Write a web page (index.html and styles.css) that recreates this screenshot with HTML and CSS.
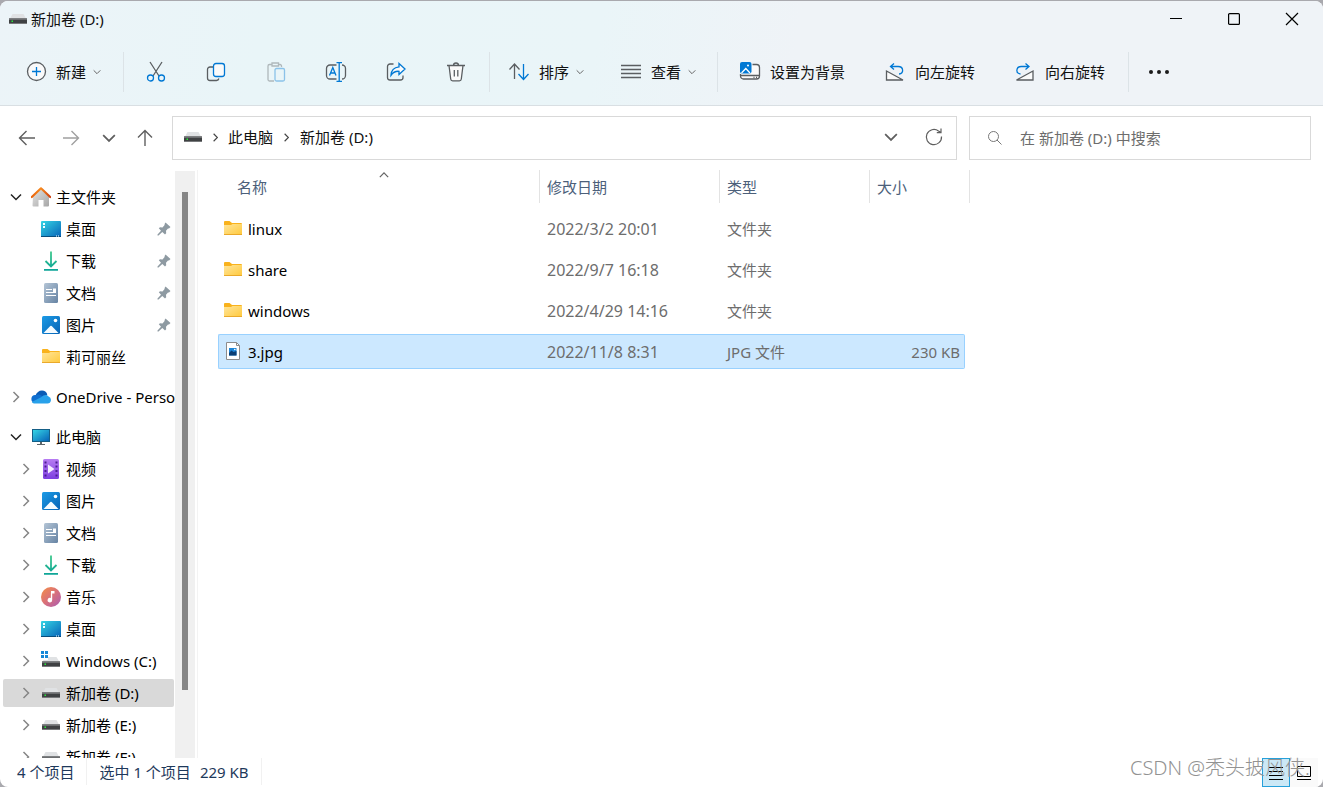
FILE: index.html
```html
<!DOCTYPE html>
<html lang="zh-CN">
<head>
<meta charset="utf-8">
<title>新加卷 (D:)</title>
<link rel="stylesheet" href="styles.css">
</head>
<body>
<svg class="sprite" aria-hidden="true">
  <defs>
    <linearGradient id="g-desk" x1="0" y1="0" x2="1" y2="1"><stop offset="0" stop-color="#35d5e4"/><stop offset="1" stop-color="#0763b8"/></linearGradient>
    <linearGradient id="g-pic" x1="0" y1="0" x2="1" y2="1"><stop offset="0" stop-color="#1c9be6"/><stop offset="1" stop-color="#0763b5"/></linearGradient>
    <linearGradient id="g-folder" x1="0" y1="0" x2="1" y2="1"><stop offset="0" stop-color="#ffe59a"/><stop offset="1" stop-color="#ffc93c"/></linearGradient>
    <linearGradient id="g-doc" x1="0" y1="0" x2="1" y2="1"><stop offset="0" stop-color="#b4c5d6"/><stop offset="1" stop-color="#6683a3"/></linearGradient>
    <linearGradient id="g-down" x1="0" y1="0" x2="0" y2="20" gradientUnits="userSpaceOnUse"><stop offset="0" stop-color="#3fc98b"/><stop offset="1" stop-color="#0ba398"/></linearGradient>
    <linearGradient id="g-house" x1="0" y1="0" x2="1" y2="1"><stop offset="0" stop-color="#e4e4e4"/><stop offset="1" stop-color="#a6a6a6"/></linearGradient>
    <linearGradient id="g-roof" x1="0" y1="0" x2="1" y2="0"><stop offset="0" stop-color="#e8620c"/><stop offset="0.5" stop-color="#f68a1e"/><stop offset="1" stop-color="#cf4010"/></linearGradient>
    <linearGradient id="g-video" x1="0" y1="0" x2="0" y2="1"><stop offset="0" stop-color="#b77cf2"/><stop offset="1" stop-color="#7d3fe0"/></linearGradient>
    <linearGradient id="g-music" x1="0" y1="0" x2="1" y2="1"><stop offset="0" stop-color="#f59045"/><stop offset="0.5" stop-color="#d9707a"/><stop offset="1" stop-color="#a85bb5"/></linearGradient>
  </defs>
  <symbol id="drive" viewBox="0 0 20 20"><path d="M4.500 5h11l3 5.500h-17z" fill="#e0e2e4"/><rect x="1" y="9.500" width="18" height="5.500" fill="#3f4143"/><rect x="1" y="9.500" width="18" height="1.500" fill="#6c6e70"/><rect x="1" y="14" width="18" height="1" fill="#77797b"/><rect x="3.500" y="11.500" width="1.500" height="1.500" fill="#28e83c"/></symbol>
  <symbol id="windrive" viewBox="0 0 20 20"><path d="M7 6h8.500l3 5h-17l1-2H7z" fill="#e0e2e4"/><rect x="1" y="10.500" width="18" height="5.500" fill="#3f4143"/><rect x="1" y="10.500" width="18" height="1.500" fill="#6c6e70"/><rect x="1" y="15" width="18" height="1" fill="#77797b"/><rect x="3.500" y="12.500" width="1.500" height="1.500" fill="#28e83c"/><path d="M0 0h3v3H0zM4 0h3v3H4zM0 4h3v3H0zM4 4h3v3H4z" fill="#1688d8"/></symbol>
  <symbol id="folder" viewBox="0 0 20 20"><path d="M1 3a1 1 0 0 1 1-1h4.500L9 4h9a1 1 0 0 1 1 1v4H1z" fill="#f9b21c"/><path d="M1 6h7l1.500-1H19v11H1z" fill="url(#g-folder)"/><path d="M1 15h18v1H1z" fill="#eaa92a"/></symbol>
  <symbol id="home" viewBox="0 0 20 20"><path d="M2 9 10 2l8 7v9.500a1 1 0 0 1-1 1h-4.500V13h-5v6.500H2.500a1 1 0 0 1-1-1z" fill="url(#g-house)"/><path d="M.8 10 10 1.300 19.200 10" fill="none" stroke="url(#g-roof)" stroke-width="2.200" stroke-linejoin="round" stroke-linecap="round"/></symbol>
  <symbol id="desktop" viewBox="0 0 20 20"><rect y="2" width="20" height="16" rx="1" fill="url(#g-desk)"/><path d="M0 17h20v1H0z" fill="#084d7c"/><path d="M2 4h2v2H2zM2 7h2v2H2z" fill="#f2ffff"/><path d="M15 16.500h1v1h-1zM17 16.500h1v1h-1z" fill="#fff"/></symbol>
  <symbol id="download" viewBox="0 0 20 20"><path d="M10 .5V15M4.500 10l5.500 5.500 5.500-5.500M3 18.800h14" fill="none" stroke="url(#g-down)" stroke-width="1.800"/></symbol>
  <symbol id="document" viewBox="0 0 20 20"><rect x="3" y="0" width="14" height="20" rx="1.500" fill="url(#g-doc)"/><path d="M5 6.500h6M5 9.500h10M5 12.500h10" stroke="#fff" stroke-width="1.200"/><rect x="12" y="5.500" width="3" height="3.500" fill="#fff"/></symbol>
  <symbol id="picture" viewBox="0 0 20 20"><rect x="1" y="1" width="18" height="18" rx="1.500" fill="url(#g-pic)"/><path d="m2.500 18 6.800-7a1 1 0 0 1 1.400 0l6.800 7z" fill="#f4fbff"/><circle cx="14.500" cy="5.500" r="1.800" fill="#fff"/></symbol>
  <symbol id="cloud" viewBox="0 0 20 20"><path d="M4.500 8.500C5.500 5.500 8 3.500 11 3.500c2.500 0 4.600 1.500 5.300 4l-5 5z" fill="#0a5bb5"/><path d="M4 16a4 4 0 0 1 .8-8C7 7 9.500 7.500 11 9l5 5-12 2z" fill="#0f6fd0"/><path d="M4 16.500c-1.300 0-2.400-.5-3.200-1.500L10.500 10c2-2.500 5.500-2.700 7-.5a3.600 3.600 0 0 1-1 7z" fill="#28a1ea"/></symbol>
  <symbol id="monitor" viewBox="0 0 20 20"><rect x="1" y="2" width="18" height="13" fill="#155f86"/><rect x="2" y="3" width="16" height="11" fill="url(#g-desk)"/><path d="M9 15h2v2h3v1H6v-1h3z" fill="#5e6569"/></symbol>
  <symbol id="video" viewBox="0 0 20 20"><rect x="2" width="16" height="20" rx="1.500" fill="url(#g-video)"/><path d="M3.500 2.500h2v2h-2zM3.500 6.500h2v2h-2zM3.500 11h2v2h-2zM3.500 15.500h2v2h-2zM14.500 2.500h2v2h-2zM14.500 6.500h2v2h-2zM14.500 11h2v2h-2zM14.500 15.500h2v2h-2z" fill="#4b1d91"/><path d="m7 5.500 6.500 4.500L7 14.500z" fill="#f5edff"/></symbol>
  <symbol id="music" viewBox="0 0 20 20"><circle cx="10" cy="10" r="10" fill="url(#g-music)"/><path d="M10 4h3.500v2.500h-2.300V13A2.300 2.300 0 1 1 9.800 11z" fill="#fff"/></symbol>
  <symbol id="jpg" viewBox="0 0 20 20"><path d="M3.500 .5h10l3 3v14h-13z" fill="#fff" stroke="#8c8c8c"/><path d="M13.500 .5v3h3" fill="none" stroke="#8c8c8c"/><rect x="6" y="6" width="7.500" height="7.500" fill="#1c86d8"/><path d="m6 11 2.500-2.500 2 1.500 3-1v4.500H6z" fill="#0b3e74"/><circle cx="11.800" cy="7.500" r=".8" fill="#fff"/></symbol>
  <symbol id="pin" viewBox="0 0 16 16"><path d="M9.500 1.500 14.500 6 13 7.500h-1l-2 2.200.2 2.600L9 13.500 6.300 11 2.500 14.500 1.500 14.500V13.500L5 9.700 2.800 7.200 4 6.200l2.500.2L8.600 4V3z" fill="#8e9aa2"/></symbol>
  <symbol id="chev-down" viewBox="0 0 12 12"><path d="m1 3.500 5 5 5-5" fill="none" stroke="currentColor" stroke-width="1.500"/></symbol>
  <symbol id="chev-right" viewBox="0 0 12 12"><path d="m3.500 1 5 5-5 5" fill="none" stroke="currentColor" stroke-width="1.500"/></symbol>
  <symbol id="arrow-left" viewBox="0 0 20 20"><path d="M18 10H2.500M9.500 3l-7 7 7 7" fill="none" stroke="currentColor" stroke-width="1.400"/></symbol>
  <symbol id="arrow-right" viewBox="0 0 20 20"><path d="M2 10h15.500M10.500 3l7 7-7 7" fill="none" stroke="currentColor" stroke-width="1.400"/></symbol>
  <symbol id="arrow-up" viewBox="0 0 20 20"><path d="M10 18V2.500M3 9.500l7-7 7 7" fill="none" stroke="currentColor" stroke-width="1.400"/></symbol>
</svg>

<div class="window">
  <header class="chrome">
    <div class="titlebar">
      <svg class="icon"><use href="#drive"/></svg>
      <h1 class="title">新加卷 (D:)</h1>
      <div class="caption">
        <button class="caption-btn" aria-label="最小化"><svg class="glyph" viewBox="0 0 12 12"><path d="M0 5.500h12"/></svg></button>
        <button class="caption-btn" aria-label="最大化"><svg class="glyph" viewBox="0 0 12 12"><rect x=".6" y=".6" width="10.800" height="10.800" rx="1"/></svg></button>
        <button class="caption-btn" aria-label="关闭"><svg class="glyph" viewBox="0 0 12 12"><path d="m0 0 12 12M12 0 0 12"/></svg></button>
      </div>
    </div>
    <div class="toolbar">
      <div class="group group-new">
        <button class="tool"><svg class="line" viewBox="0 0 20 20"><circle class="paper" cx="10.500" cy="9.500" r="9"/><path class="blue" d="M10.500 5v9M6 9.500h9"/></svg><span>新建</span><svg class="mini"><use href="#chev-down"/></svg></button>
      </div>
      <div class="group group-edit">
        <button class="tool only" aria-label="剪切"><svg class="line" viewBox="0 0 20 20"><path d="M4 0l9 14M16 0 7 14"/><circle class="blue" cx="4.500" cy="16" r="3"/><circle class="blue" cx="15.500" cy="16" r="3"/></svg></button>
        <button class="tool only" aria-label="复制"><svg class="line" viewBox="0 0 20 20"><path d="M7 5H4a2.500 2.500 0 0 0-2.500 2.500V16A2.500 2.500 0 0 0 4 18.500h6.500a2.500 2.500 0 0 0 2.400-2"/><rect class="blue paper" x="7.500" y="1.500" width="11" height="13" rx="2.500"/></svg></button>
        <button class="tool only" aria-label="粘贴" disabled><svg class="line faded" viewBox="0 0 20 20"><path d="M6 2.500H3.500a1.500 1.500 0 0 0-1.500 1.500v13.500A1.500 1.500 0 0 0 3.500 19H8M12.500 2.500H14A1.500 1.500 0 0 1 15.500 4v1M6 1h6.500v3H6z"/><rect class="blue" x="9" y="6.500" width="9.500" height="12.500" rx="1.500"/></svg></button>
        <button class="tool only" aria-label="重命名"><svg class="line" viewBox="0 0 20 20"><path d="M10.500 3H4A3.500 3.500 0 0 0 .5 6.500v7A3.500 3.500 0 0 0 4 17h6.500M16 3a3.500 3.500 0 0 1 3.500 3.500v7A3.500 3.500 0 0 1 16 17"/><path class="blue" d="M3.500 13.500 6.800 5.500l3.200 8M4.800 11h4M10.500.7h5.500M13.200.7v18.600M10.500 19.300h5.500"/></svg></button>
        <button class="tool only" aria-label="共享"><svg class="line" viewBox="0 0 20 20"><path d="M7.500 2H4a2.500 2.500 0 0 0-2.500 2.500v11A2.500 2.500 0 0 0 4 18h10.500a2.500 2.500 0 0 0 2.500-2.500v-2"/><path class="blue paper" d="M13 1.500 19 7l-6 5.500V9.300c-3.500-.3-6 1-8 4 .2-4.500 3-8 8-8.500z"/></svg></button>
        <button class="tool only" aria-label="删除"><svg class="line" viewBox="0 0 20 20"><path class="paper" d="M3 3.500 4.700 17a2 2 0 0 0 2 1.800h6.600a2 2 0 0 0 2-1.800L17 3.500"/><path d="M1 3.500h18M7.500 3.500a2.500 2.500 0 0 1 5 0M8.300 8v6.500M11.800 8v6.500"/></svg></button>
      </div>
      <div class="group group-sort">
        <button class="tool"><svg class="line" viewBox="0 0 20 20"><path d="M5.500 17V2.500M.5 7.500l5-5.500 5 5.500"/><path class="blue" d="M14.500 2v15M9.500 12l5 5.500 5-5.500"/></svg><span>排序</span><svg class="mini"><use href="#chev-down"/></svg></button>
        <button class="tool"><svg class="line" viewBox="0 0 20 20"><path d="M0 3.500h20M0 7.500h20M0 11.500h20M0 15.500h20"/></svg><span>查看</span><svg class="mini"><use href="#chev-down"/></svg></button>
      </div>
      <div class="group group-image">
        <button class="tool"><svg class="line" viewBox="0 0 20 20"><path class="paper" d="M12.500 2.500h4a3 3 0 0 1 3 3V14a3 3 0 0 1-3 3h-13a3 3 0 0 1-3-3v-2"/><path d="M.5 13.500h19M13.500 15.500h1M16 15.500h1"/><rect x="0" y="0" width="11.500" height="11.500" rx="2" fill="#0078d4" stroke="none"/><path d="m1.500 11 4.300-4.500L10 11" stroke="#fff"/><circle cx="8" cy="3.500" r="1" fill="#fff" stroke="none"/></svg><span>设置为背景</span></button>
        <button class="tool"><svg class="line" viewBox="0 0 20 20"><path class="paper" d="M1.500 9v9H18z"/><path class="blue" d="M9 1.500 5.500 4.500 9 7.500M5.500 4.500h7.700c5.500 0 6 7 .8 7.500"/></svg><span>向左旋转</span></button>
        <button class="tool"><svg class="line" viewBox="0 0 20 20"><path class="paper" d="M18 9v9H1.500z"/><path class="blue" d="M10.500 1.500 14 4.500l-3.500 3M14 4.500H6.300C.8 4.500.3 11.500 5.500 12"/></svg><span>向右旋转</span></button>
      </div>
      <div class="group group-more">
        <button class="tool" aria-label="更多"><svg class="dots" viewBox="0 0 22 20"><circle cx="3" cy="10" r="2"/><circle cx="11" cy="10" r="2"/><circle cx="19" cy="10" r="2"/></svg></button>
      </div>
    </div>
  </header>

  <div class="navbar">
    <div class="history">
      <button class="nav-btn" aria-label="后退"><svg class="icon"><use href="#arrow-left"/></svg></button>
      <button class="nav-btn" aria-label="前进" disabled><svg class="icon"><use href="#arrow-right"/></svg></button>
      <button class="nav-btn narrow" aria-label="最近位置"><svg class="small"><use href="#chev-down"/></svg></button>
      <button class="nav-btn up" aria-label="上一级"><svg class="icon"><use href="#arrow-up"/></svg></button>
    </div>
    <nav class="address" aria-label="地址">
      <svg class="icon"><use href="#drive"/></svg>
      <svg class="crumb-sep"><use href="#chev-right"/></svg>
      <a class="crumb" href="#">此电脑</a>
      <svg class="crumb-sep"><use href="#chev-right"/></svg>
      <a class="crumb" href="#">新加卷 (D:)</a>
      <div class="address-tools">
        <button class="addr-btn" aria-label="展开"><svg class="small"><use href="#chev-down"/></svg></button>
        <button class="addr-btn" aria-label="刷新"><svg class="icon" viewBox="0 0 20 20"><path d="M17.500 9.500A7.600 7.600 0 1 1 14.500 4L17 5.500M17 1.500v4.200h-4.200" fill="none" stroke="currentColor" stroke-width="1.200"/></svg></button>
      </div>
    </nav>
    <label class="search">
      <svg class="magnifier" viewBox="0 0 14 14"><circle cx="5.500" cy="5.500" r="5"/><path d="m9 9 4.500 4.500"/></svg>
      <input class="search-input" type="text" placeholder="在 新加卷 (D:) 中搜索" aria-label="搜索">
    </label>
  </div>

  <main class="body">
    <aside class="sidebar">
      <ul class="tree">
        <li class="node"><svg class="twist open"><use href="#chev-down"/></svg><svg class="icon"><use href="#home"/></svg><span>主文件夹</span></li>
        <li class="node sub"><svg class="icon"><use href="#desktop"/></svg><span>桌面</span><svg class="pin"><use href="#pin"/></svg></li>
        <li class="node sub"><svg class="icon"><use href="#download"/></svg><span>下载</span><svg class="pin"><use href="#pin"/></svg></li>
        <li class="node sub"><svg class="icon"><use href="#document"/></svg><span>文档</span><svg class="pin"><use href="#pin"/></svg></li>
        <li class="node sub"><svg class="icon"><use href="#picture"/></svg><span>图片</span><svg class="pin"><use href="#pin"/></svg></li>
        <li class="node sub"><svg class="icon"><use href="#folder"/></svg><span>莉可丽丝</span></li>
        <li class="node root"><svg class="twist"><use href="#chev-right"/></svg><svg class="icon"><use href="#cloud"/></svg><span>OneDrive - Personal</span></li>
        <li class="node root"><svg class="twist open"><use href="#chev-down"/></svg><svg class="icon"><use href="#monitor"/></svg><span>此电脑</span></li>
        <li class="node child"><svg class="twist"><use href="#chev-right"/></svg><svg class="icon"><use href="#video"/></svg><span>视频</span></li>
        <li class="node child"><svg class="twist"><use href="#chev-right"/></svg><svg class="icon"><use href="#picture"/></svg><span>图片</span></li>
        <li class="node child"><svg class="twist"><use href="#chev-right"/></svg><svg class="icon"><use href="#document"/></svg><span>文档</span></li>
        <li class="node child"><svg class="twist"><use href="#chev-right"/></svg><svg class="icon"><use href="#download"/></svg><span>下载</span></li>
        <li class="node child"><svg class="twist"><use href="#chev-right"/></svg><svg class="icon"><use href="#music"/></svg><span>音乐</span></li>
        <li class="node child"><svg class="twist"><use href="#chev-right"/></svg><svg class="icon"><use href="#desktop"/></svg><span>桌面</span></li>
        <li class="node child"><svg class="twist"><use href="#chev-right"/></svg><svg class="icon"><use href="#windrive"/></svg><span>Windows (C:)</span></li>
        <li class="node child current"><svg class="twist"><use href="#chev-right"/></svg><svg class="icon"><use href="#drive"/></svg><span>新加卷 (D:)</span></li>
        <li class="node child"><svg class="twist"><use href="#chev-right"/></svg><svg class="icon"><use href="#drive"/></svg><span>新加卷 (E:)</span></li>
        <li class="node child"><svg class="twist"><use href="#chev-right"/></svg><svg class="icon"><use href="#drive"/></svg><span>新加卷 (F:)</span></li>
      </ul>
      <div class="scrollbar"><div class="thumb"></div></div>
    </aside>
    <section class="content">
      <table class="files">
        <thead>
          <tr>
            <th class="col-name"><span class="head">名称</span><svg class="sort-mark"><use href="#chev-down"/></svg></th>
            <th class="col-date"><span class="head">修改日期</span></th>
            <th class="col-type"><span class="head">类型</span></th>
            <th class="col-size"><span class="head">大小</span></th>
          </tr>
        </thead>
        <tbody>
          <tr><td><span class="file"><svg class="icon"><use href="#folder"/></svg>linux</span></td><td class="date">2022/3/2 20:01</td><td>文件夹</td><td></td></tr>
          <tr><td><span class="file"><svg class="icon"><use href="#folder"/></svg>share</span></td><td class="date">2022/9/7 16:18</td><td>文件夹</td><td></td></tr>
          <tr><td><span class="file"><svg class="icon"><use href="#folder"/></svg>windows</span></td><td class="date">2022/4/29 14:16</td><td>文件夹</td><td></td></tr>
          <tr class="selected"><td><span class="file"><svg class="icon"><use href="#jpg"/></svg>3.jpg</span></td><td class="date">2022/11/8 8:31</td><td>JPG 文件</td><td class="size">230 KB</td></tr>
        </tbody>
      </table>
    </section>
  </main>

  <footer class="status">
    <span class="status-item">4 个项目</span>
    <span class="status-item"><span>选中 1 个项目</span><span>229 KB</span></span>
    <div class="views">
      <button class="view-btn active" aria-label="详细信息"><svg class="view-icon" viewBox="0 0 16 16"><path d="M1 2.500h14M1 6.500h14M1 10.500h14M1 14.500h14"/></svg></button>
      <button class="view-btn" aria-label="大缩略图"><svg class="view-icon" viewBox="0 0 16 16"><path d="M1.500 1.500h13v10h-13zM1 14.500h14"/></svg></button>
    </div>
    <span class="watermark">CSDN @秃头披风侠.</span>
  </footer>
</div>
</body>
</html>
```
FILE: styles.css
```css
* { box-sizing: border-box; }

body {
  margin: 0;
  height: 100vh;
  padding-top: 1px;
  background: #a9a9ae;
  color: #111;
  font-family: "Noto Sans", "Noto Sans CJK SC", sans-serif;
  font-size: 15px;
  line-height: 20px;
  overflow: hidden;
}

button {
  border: 0;
  padding: 0;
  background: none;
  color: inherit;
  font: inherit;
}

svg { display: block; flex: none; }
.sprite { position: absolute; width: 0; height: 0; }
.icon { width: 20px; height: 20px; }
.small { width: 14px; height: 14px; }

.window {
  display: flex;
  flex-direction: column;
  height: 100%;
  border-radius: 8px;
  background: #fff;
  overflow: hidden;
}

/* Title bar and command bar */
.chrome {
  flex: none;
  background: linear-gradient(100deg, #ecf4f8 0%, #e9f5f8 20%, #eaf5f8 45%, #eff3f7 60%, #eff3f7 100%);
  border-bottom: 1px solid #d9dfe3;
}

.titlebar {
  display: flex;
  align-items: center;
  gap: 3px;
  height: 38px;
  padding: 0 2px 2px 8px;
}

.title { margin: 0; font-size: 15px; font-weight: 400; }
.caption { display: flex; margin-left: auto; }
.caption-btn { display: grid; place-items: center; width: 58px; height: 36px; }
.glyph { width: 12px; height: 12px; overflow: visible; fill: none; stroke: #000; stroke-width: 1.200; }

.toolbar { display: flex; align-items: center; height: 66px; }
.group { display: flex; align-items: center; height: 40px; }
.group + .group { border-left: 1px solid #dce3e7; }
.group-new { padding: 0 10px 0 16px; }
.group-edit { padding: 0 3px 0 2px; }
.group-sort { gap: 15px; padding: 0 9px; }
.group-image { gap: 20px; padding: 0 13px 0 12px; }
.group-more { padding-left: 9px; }

.tool { display: flex; align-items: center; gap: 10px; height: 36px; padding: 0 10px; white-space: nowrap; }
.only { justify-content: center; width: 60px; }
.mini { width: 8px; height: 8px; margin-left: -3px; margin-right: 2px; color: #666; }
.line { width: 20px; height: 20px; overflow: visible; fill: none; stroke: #5a5e61; stroke-width: 1.300; }
.paper { fill: #fafafa; }
.blue { stroke: #0078d4; }
.faded { opacity: 0.400; }
.dots { width: 22px; height: 20px; fill: #1b1b1b; }

/* Navigation bar */
.navbar { display: flex; flex: none; gap: 10px; height: 64px; padding: 10px 12px 10px 8px; }
.history { display: flex; flex: none; align-items: center; gap: 6px; color: #5f5f5f; }
.nav-btn { display: grid; place-items: center; width: 38px; height: 38px; }
.nav-btn.narrow { width: 26px; }
.nav-btn.up { width: 34px; }
.nav-btn:disabled { color: #a0a0a0; }

.address {
  display: flex;
  flex: 1;
  align-items: center;
  padding: 0 11px 2px 10px;
  border: 1px solid #d9d9d9;
}
.crumb { color: #111; text-decoration: none; white-space: nowrap; }
.crumb-sep { width: 9px; height: 9px; margin: 0 8px; color: #444; }
.crumb + .crumb-sep { margin: 0 9px; }
.address-tools { display: flex; gap: 21px; margin-left: auto; color: #5f5f5f; }
.addr-btn { display: grid; place-items: center; width: 22px; height: 32px; }

.search {
  display: flex;
  align-items: center;
  gap: 18px;
  width: 342px;
  margin-left: 2px;
  padding: 0 18px;
  border: 1px solid #d9d9d9;
}
.magnifier { width: 14px; height: 14px; fill: none; stroke: #777; }
.search-input {
  flex: 1;
  min-width: 0;
  border: 0;
  padding: 0;
  outline: 0;
  background: none;
  font: inherit;
}
.search-input::placeholder { color: #6d6d6d; opacity: 1; }

/* Folder tree */
.body { display: flex; flex: 1; min-height: 0; }
.sidebar { display: flex; flex: none; width: 198px; border-right: 1px solid #f3f3f3; }
.tree {
  width: 175px;
  height: 100%;
  margin: 0;
  padding: 11px 1px 0 3px;
  list-style: none;
  overflow: hidden;
}
.node {
  display: flex;
  align-items: center;
  gap: 5px;
  height: 28px;
  margin: 2px 0 4px;
  padding-left: 7px;
  white-space: nowrap;
  color: #000;
}
.node .icon { margin-left: 4px; }
.node.root { margin-top: 12px; }
.node.sub { padding-left: 34px; }
.node.child { padding-left: 17px; }
.node.current { background: #d9d9d9; border-radius: 2px; }
.twist { width: 12px; height: 12px; color: #858585; }
.twist.open { color: #222; }
.pin { width: 16px; height: 16px; margin-left: auto; margin-right: 2px; }
.scrollbar { width: 20px; margin-top: 1px; padding: 21px 7px 0; background: #f0f0f0; }
.thumb { height: 88%; background: #868686; }

/* File list */
.content { flex: 1; min-width: 0; padding-left: 20px; }
.files {
  width: 747px;
  margin-top: -6px;
  border-spacing: 0 6px;
  table-layout: fixed;
  color: #6d6d6d;
}
th {
  position: relative;
  height: 35px;
  padding: 0;
  text-align: left;
  vertical-align: top;
  font-weight: 400;
  color: #4c607a;
}
.head { display: block; height: 33px; padding: 7px 0 0 7px; border-left: 1px solid #e3e3e3; }
.col-name { width: 321px; }
.col-name .head { border-color: transparent; padding-left: 18px; }
.col-date { width: 180px; }
.col-type { width: 150px; }
.col-size::after { content: ""; position: absolute; top: 0; right: -5px; width: 1px; height: 33px; background: #e3e3e3; }
.sort-mark { position: absolute; top: 0; left: 161px; width: 10px; height: 10px; color: #666; transform: rotate(180deg); }
td { height: 35px; padding: 0 0 0 8px; border: solid transparent; border-width: 1px 0; }
td:first-child { padding-left: 4px; border-left-width: 1px; }
td:last-child { padding-right: 4px; border-right-width: 1px; }
.file { display: flex; align-items: center; gap: 5px; color: #000; }
.date { font-size: 16px; }
.selected td { background: #cce8ff; border-color: #99d1ff; }
.selected td:first-child { border-radius: 2px 0 0 2px; }
.selected td:last-child { border-radius: 0 2px 2px 0; }
.size { text-align: right; }

/* Status bar */
.status { position: relative; display: flex; flex: none; height: 29px; padding-left: 17px; color: #1e395b; }
.status-item { display: flex; gap: 9px; align-items: center; height: 27px; padding-right: 12px; }
.status-item + .status-item { padding-left: 12px; border-left: 1px solid #f1f1f1; border-right: 1px solid #f1f1f1; }
.views { display: flex; margin-left: auto; padding-right: 5px; }
.view-btn { display: grid; place-items: center; width: 28px; height: 29px; border: 1px solid transparent; background: #fafafa; }
.view-btn.active { border-color: #26a0da; background: #cbe8f6; }
.view-icon { width: 16px; height: 16px; fill: none; stroke: #000; }
.watermark {
  position: absolute;
  right: 13px;
  top: -3px;
  color: #929292;
  font-size: 20px;
  font-weight: 300;
  line-height: 26px;
  white-space: nowrap;
}
```
